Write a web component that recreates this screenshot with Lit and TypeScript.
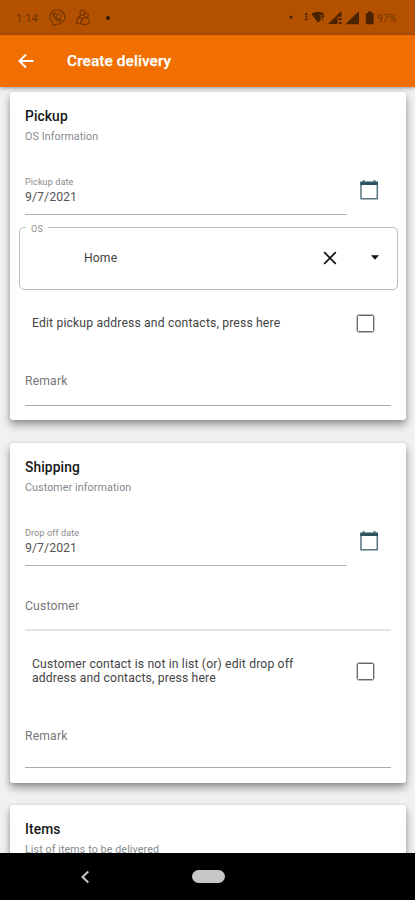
import { LitElement, html, css } from "lit";
import { customElement, property } from "lit/decorators.js";

@customElement("date-field")
class DateField extends LitElement {
  @property() label = "";
  @property() value = "";
  static styles = css`
    :host { display: flex; height: 40px; justify-content: space-between; }
    .field { width: 322px; box-sizing: border-box; border-bottom: 1px solid #b2b2b2; }
    .label { font-size: 9px; line-height: 12px; color: #898989; letter-spacing: 0.12px; margin-top: 1px; }
    .value { font-size: 12.3px; line-height: 16px; color: #555; letter-spacing: 0.05px; margin-top: 1px; }
    svg { display: block; margin: 4px 12px 0 0; }
  `;
  render() {
    return html`
      <div class="field">
        <div class="label">${this.label}</div>
        <div class="value">${this.value}</div>
      </div>
      <svg width="20" height="22" viewBox="0 0 20 22">
        <path d="M2 4h16.300v15.700H2z" fill="none" stroke="#56747f" stroke-width="1.500" stroke-linejoin="round" />
        <path d="M1.300 2.500H19v3.500H1.300z" fill="#2d5260" />
        <path d="M4.700 1v2M15.500 1v2" stroke="#56747f" stroke-width="2" />
      </svg>
    `;
  }
}

@customElement("check-row")
class CheckRow extends LitElement {
  @property({ type: Array }) lines: string[] = [];
  static styles = css`
    :host { display: flex; align-items: center; justify-content: space-between; padding: 0 17px 0 7px; }
    .text { font-size: 12.2px; line-height: 14.4px; color: #444; letter-spacing: 0.15px; white-space: nowrap; }
    .box { width: 17px; height: 17px; box-sizing: border-box; border: 1.500px solid #666; border-radius: 1.500px; box-shadow: 0 0 0 .4px #777; }
  `;
  render() {
    return html`
      <div class="text">${this.lines.map((l) => html`<div>${l}</div>`)}</div>
      <div class="box"></div>
    `;
  }
}

@customElement("app-root")
class AppRoot extends LitElement {
  static styles = css`
    :host {
      display: flex; flex-direction: column; width: 415px; height: 900px; overflow: hidden;
      font-family: Roboto, "Liberation Sans", sans-serif; background: #eff1f3;
    }
    .status {
      height: 35px; flex: none; background: #b35100; color: #713400; display: flex;
      align-items: center; justify-content: space-between;
    }
    .status svg { display: block; }
    .left, .right { display: flex; align-items: center; }
    .left { padding-left: 16px; }
    .right { padding-right: 16px; }
    .time { font-size: 11.2px; width: 33px; letter-spacing: 0.1px; margin-top: 1px; }
    .pct { font-size: 10.4px; width: 22px; white-space: nowrap; letter-spacing: 0.1px; margin-top: 2px; }
    .bar {
      height: 52px; flex: none; background: #f06f00; display: flex; align-items: center;
      padding-left: 18px; gap: 33px; box-shadow: 0 1px 4px rgba(0, 0, 0, 0.4); z-index: 1;
    }
    .bar svg { display: block; }
    .heading { color: #fff; font-size: 15.400px; font-weight: 500; letter-spacing: 0.1px; -webkit-text-stroke: 0.25px #fff; }
    .content {
      flex: 1; min-height: 0; overflow: hidden; padding: 5px 9px 0 10px;
      display: flex; flex-direction: column; gap: 23px;
    }
    .card {
      flex: none; box-sizing: border-box; background: #fff; border-radius: 3px; padding: 15px 15px 0;
      box-shadow: 0 5px 9px rgba(0, 0, 0, 0.36), 0 1px 4px rgba(0, 0, 0, 0.12);
    }
    .pickup { height: 328px; }
    .shipping { height: 340px; margin-bottom: -1px; }
    .items { height: 120px; }
    .title { font-size: 13.8px; font-weight: 500; line-height: 18px; color: #171717; letter-spacing: 0.1px; }
    .sub { font-size: 10.700px; line-height: 14px; margin-top: 5px; color: #858a8d; letter-spacing: 0.1px; }
    date-field { margin-top: 31px; }
    .select {
      margin: 12px -6px 0; height: 63px; min-width: 0; width: 379px; box-sizing: border-box;
      border: 1px solid #bcbcbc; border-radius: 5px; padding: 0; display: flex; align-items: center;
      position: relative;
    }
    .legend {
      position: absolute; left: 6px; top: -5px; padding: 0 5px; background: #fff; color: #929292;
      font-size: 9.2px; line-height: 11px; letter-spacing: 0.3px;
    }
    .home { font-size: 12.2px; color: #444; margin-left: 64px; flex: 1; letter-spacing: 0.1px; }
    .select svg { margin-bottom: 2px; }
    .home { margin-bottom: 1px; }
    .clear { margin-right: 34px; }
    .caret { margin-right: 18px; }
    .input { box-sizing: border-box; font-size: 12.2px; line-height: 16px; color: #777; letter-spacing: 0.15px; border-bottom: 1px solid #aaa; }
    .remark { height: 33px; }
    .customer { height: 33px; margin-top: 32px; border-bottom: 2px solid #e3e3e3; }
    .pickup check-row { height: 20px; margin-top: 23px; }
    .pickup .input { margin-top: 40px; }
    .shipping check-row { height: 30px; margin-top: 25px; }
    .shipping .remark { margin-top: 42px; height: 40px; }
    .nav { height: 47px; flex: none; background: #000; display: flex; align-items: center; z-index: 1; }
    .nav svg { display: block; margin-left: 80px; }
    .pill { width: 33px; height: 13px; border-radius: 7px; background: #c7c7c7; margin-left: 102px; }
  `;

  render() {
    return html`
      <div class="status">
        <div class="left">
          <span class="time">1:14</span>
          <svg width="62" height="18" viewBox="49 9 62 18" fill="none" stroke="#713400" stroke-width="1.100" stroke-linecap="round" stroke-linejoin="round">
            <path d="M52.300 22.300A7.500 7.200 0 1 1 56.500 24.200L53.300 25.200z" />
            <path d="M54.300 13.300q-1.500 1-.4 3.300q1.600 3.400 5 4.700q1.600.3 2.300-1.500l-2-1.500-1.200.8q-1.500-.8-2-2.500l.9-1.100-1.200-2.200z" />
            <path d="M58.300 12.700c2.200.2 3.400 1.600 3.500 3.700M58.400 14.700c.9.100 1.500.7 1.500 1.600" stroke-width=".9" />
            <circle cx="82.300" cy="12.700" r="2.500" />
            <path d="M80.500 15.500c-2.600 1.400-3.900 4.200-4 8.200h3.700M79.500 16.800l2.600 2.200" />
            <circle cx="86.200" cy="15" r="2.200" />
            <path d="M84.800 17.700c-2.500.8-4 2.800-4.200 5.800 2.800 1.500 6.500 1.200 8.800-.6-.1-2.700-1-4.600-2.600-5.300z" />
            <circle cx="108" cy="18" r="2.100" fill="#351800" stroke="none" />
          </svg>
        </div>
        <div class="right">
          <svg width="88" height="16" viewBox="289 10 88 16" fill="#4b2300">
            <circle cx="291" cy="17" r="1.600" />
            <path d="M306.300 12.400l1.800 2.500h-3.600zM306.300 21l1.800-2.600h-3.600zM305.400 15.700h1.800v1.800h-1.800z" />
            <path d="M311.400 13.900c4.200-2.800 8.900-2.800 13.100 0l-1.500 2v-1.200h-2.300v5.200l-2.700 2.900z" />
            <path d="M321.700 15.500h2.400v2h-1.400v1h-1zM322 19.300h1.300v1.300H322z" />
            <path d="M341.500 11v5.700h-4v7.400h-9.500zM338.500 18h3v2h-2v1h-1zM339 22h2.500v2H339z" />
            <path d="M359 11v13.300h-13.500z" />
            <path d="M368 11.500h3.500v1.400h1.200q1 0 1 1v9.300q0 1-1 1h-5.900q-1 0-1-1v-9.300q0-1 1-1h1.200z" />
          </svg>
          <span class="pct">97%</span>
        </div>
      </div>
      <div class="bar">
        <svg width="16" height="16" viewBox="0 0 16 16" fill="none" stroke="#fff" stroke-width="2">
          <path d="M15.500 8H2M8 1.500L1.500 8 8 14.500" />
        </svg>
        <span class="heading">Create delivery</span>
      </div>
      <div class="content">
        <section class="card pickup">
          <div class="title">Pickup</div>
          <div class="sub">OS Information</div>
          <date-field label="Pickup date" value="9/7/2021"></date-field>
          <div class="select">
            <span class="legend">OS</span>
            <span class="home">Home</span>
            <svg class="clear" width="14" height="14" viewBox="0 0 14 14" stroke="#111" stroke-width="1.700"><path d="M1.200 1.200l11.600 11.600M12.800 1.200L1.200 12.800" /></svg>
            <svg class="caret" width="8" height="5" viewBox="0 0 8 5"><path d="M0 .3h8L4 4.700z" fill="#111" /></svg>
          </div>
          <check-row .lines=${["Edit pickup address and contacts, press here"]}></check-row>
          <div class="input remark">Remark</div>
        </section>
        <section class="card shipping">
          <div class="title">Shipping</div>
          <div class="sub">Customer information</div>
          <date-field label="Drop off date" value="9/7/2021"></date-field>
          <div class="input customer">Customer</div>
          <check-row .lines=${["Customer contact is not in list (or) edit drop off", "address and contacts, press here"]}></check-row>
          <div class="input remark">Remark</div>
        </section>
        <section class="card items">
          <div class="title">Items</div>
          <div class="sub">List of items to be delivered</div>
        </section>
      </div>
      <div class="nav">
        <svg width="10" height="14" viewBox="0 0 10 14" fill="none" stroke="#c7c7c7" stroke-width="2"><path d="M8.300 1.500L2.500 7l5.800 5.500" /></svg>
        <div class="pill"></div>
      </div>
    `;
  }
}
